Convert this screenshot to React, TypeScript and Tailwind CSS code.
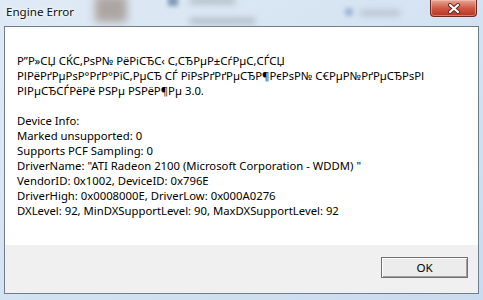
import React from "react";

const messageLines = [
    "Р”Р»СЏ СЌС‚РѕР№ РёРіСЂС‹ С‚СЂРµР±СѓРµС‚СЃСЏ",
    "РІРёРґРµРѕР°РґР°РїС‚РµСЂ СЃ РїРѕРґРґРµСЂР¶РєРѕР№ С€РµР№РґРµСЂРѕРІ",
    "РІРµСЂСЃРёРё РЅРµ РЅРёР¶Рµ 3.0.",
];

const deviceLines = [
    "Device Info:",
    "Marked unsupported: 0",
    "Supports PCF Sampling: 0",
    "DriverName: \"ATI Radeon 2100 (Microsoft Corporation - WDDM) \"",
    "VendorID: 0x1002, DeviceID: 0x796E",
    "DriverHigh: 0x0008000E, DriverLow: 0x000A0276",
    "DXLevel: 92, MinDXSupportLevel: 90, MaxDXSupportLevel: 92",
];

const CloseButton: React.FC = () => (
    <div
        className="w-[47px] h-[17px] rounded-b-[4px] border border-t-0 border-[#6b2b22] bg-gradient-to-b from-[#e7a796] via-[#cf5a45] to-[#b8321f] flex items-center justify-center shadow-[inset_0_0_0_1px_rgba(255,210,200,0.45)]">
        <svg width="14" height="11" viewBox="0 0 14 11">
            <path d="M3 2 L11 9 M11 2 L3 9" stroke="#5a2a24" strokeWidth="4" strokeLinecap="round"/>
            <path d="M3 2 L11 9 M11 2 L3 9" stroke="#ffffff" strokeWidth="2.2" strokeLinecap="round"/>
        </svg>
    </div>
);

const App: React.FC = () => {
    return (
        <div
            className="w-[483px] h-[300px] relative overflow-hidden bg-gradient-to-br from-[#dfeaf5] via-[#d4e3f2] to-[#c9dbee]"
            style={{fontFamily: "'Noto Sans', 'DejaVu Sans', sans-serif"}}>
            {/* blurred stuff behind the glass frame */}
            <div className="absolute left-[95px] top-[-4px] w-[32px] h-[26px] bg-[#9a8a80] blur-[4px] opacity-70"/>
            <div className="absolute left-[168px] top-[-4px] w-[10px] h-[10px] bg-[#5a7aa0] blur-[2px] opacity-70"/>
            <div className="absolute left-[190px] top-[-2px] w-[45px] h-[6px] bg-[#8a9098] blur-[3px] opacity-50"/>
            <div className="absolute left-[190px] top-[18px] w-[65px] h-[6px] bg-[#8a9098] blur-[3px] opacity-50"/>
            <div className="absolute left-[345px] top-[8px] w-[8px] h-[8px] bg-[#7e9cc0] blur-[2px] opacity-60"/>
            <div className="absolute left-[360px] top-[10px] w-[40px] h-[6px] bg-[#9aa2aa] blur-[3px] opacity-50"/>

            <div className="relative flex flex-col">
                <div className="h-[26px] flex items-start">
                    <span
                        className="pl-[6px] pt-[4px] text-[11.6px] leading-[15px] text-[#111]"
                        style={{textShadow: "0 0 6px #fff, 0 0 4px #fff"}}>
                        Engine Error
                    </span>
                    <div className="ml-auto mr-[6px]">
                        <CloseButton/>
                    </div>
                </div>

                <div className="ml-[4px] w-[475px] h-[268px] border border-[#6f7d8c] flex flex-col">
                    <div className="flex-1 bg-white pl-[12px] pt-[26px] text-[11.3px] leading-[15px] text-black">
                        {messageLines.map((line) => (
                            <div key={line} className="h-[15px]">{line}</div>
                        ))}
                        <div className="h-[15px]"/>
                        {deviceLines.map((line) => (
                            <div key={line} className="h-[15px] whitespace-pre">{line}</div>
                        ))}
                    </div>
                    <div className="h-[48px] bg-[#f0f0f0] flex justify-end pt-[12px] pr-[10px]">
                        <button
                            className="w-[87px] h-[21px] bg-[#ececec] border border-[#707070] shadow-[inset_1px_1px_0_#ffffff,inset_-1px_-1px_0_#a0a0a0] text-[11.6px] leading-[15px] text-black flex items-center justify-center">
                            OK
                        </button>
                    </div>
                </div>
            </div>
        </div>
    );
};

export default App;
